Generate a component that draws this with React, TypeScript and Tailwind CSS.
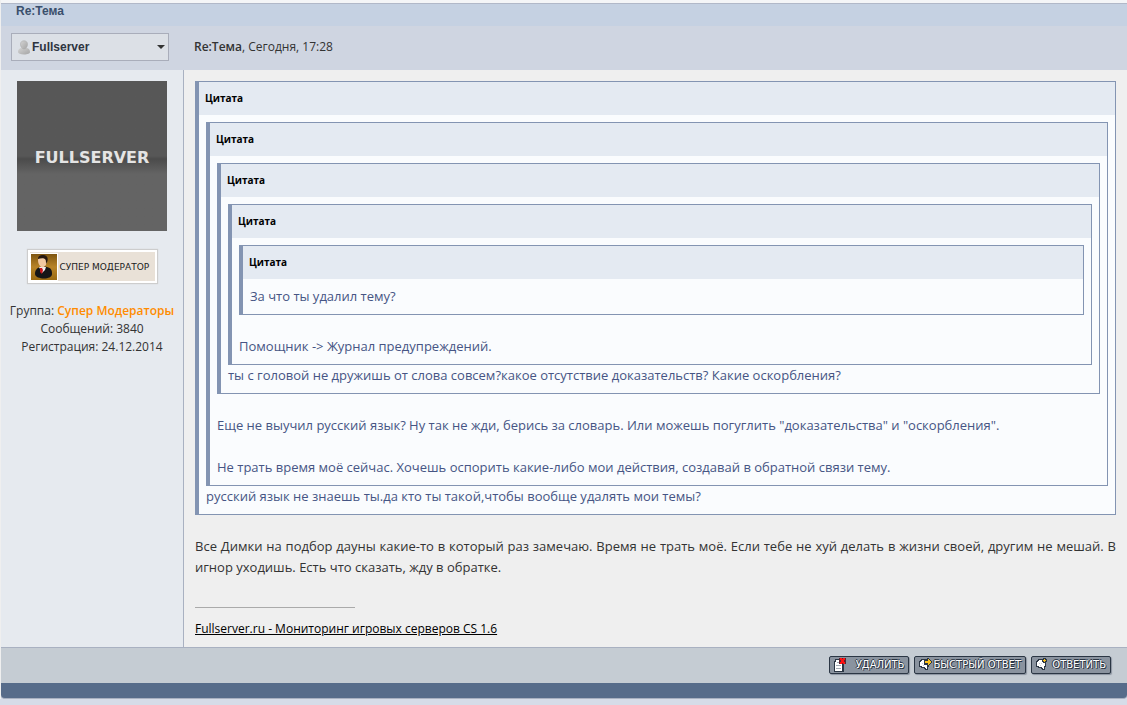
import type { ReactNode } from "react";

const QUOTE_TITLE = "Цитата";

function UserIcon() {
  return (
    <svg width="14" height="15" viewBox="0 0 14 15" aria-hidden="true">
      <defs>
        <linearGradient id="user" x1="0" y1="0" x2="1" y2="1">
          <stop offset="0" stopColor="#d4d4d4" />
          <stop offset="1" stopColor="#a4a4a4" />
        </linearGradient>
      </defs>
      <path d="M1 12c0-2.500 1.500-4 4-4.300h4c2.500.3 4 1.800 4 4.300 0 1.500-2.500 2.500-6 2.500S1 13.500 1 12z" fill="url(#user)" />
      <path d="M3.500 4.200C3.500 2 5 .8 7 .8s3.500 1.200 3.500 3.400S9 9 7 9 3.500 6.400 3.500 4.200z" fill="url(#user)" stroke="#ababab" strokeWidth=".6" />
    </svg>
  );
}

function ModeratorIcon() {
  return (
    <svg width="28" height="28" viewBox="-1 -1 28 28" className="shrink-0" aria-hidden="true">
      <defs>
        <linearGradient id="gold" x1="0" y1="0" x2="0" y2="1">
          <stop offset="0" stopColor="#7e5510" />
          <stop offset=".5" stopColor="#b88428" />
          <stop offset="1" stopColor="#9a6a12" />
        </linearGradient>
      </defs>
      <rect x="-1" y="-1" width="28" height="28" fill="#fff" />
      <rect width="26" height="26" fill="url(#gold)" />
      <path d="M4 20c0-4 2-6 5-7l3-1 4 1c4 1 5 3 5 7 0 3-4 4.500-8 4.500S4 23 4 20z" fill="#151517" />
      <path d="M8 13l3 6 3-3 1-3z" fill="#f0eeee" />
      <path d="M9 14l2 0 1 2-1 4-2-2z" fill="#c8161c" />
      <path d="M7 6c0-3 2-4 4.500-4S16 3.500 16 6.500 14 13.500 11.500 13.500 7 9.500 7 6z" fill="#f2c9a2" />
      <path d="M7 5c0-3 2-4 5-4s5.500 2 4.500 6L15 10c0-3 0-5-2-5.500-2-.5-4 0-6 .5z" fill="#26180f" />
    </svg>
  );
}

function DeleteIcon() {
  return (
    <svg width="14" height="15" viewBox="0 0 14 15" shapeRendering="crispEdges" aria-hidden="true">
      <path d="M1 2h9v13H0V4h1z" fill="#2b3644" />
      <path d="M2 3h6v11H1V5h1z" fill="#fff" />
      <path d="M3 5h3v1H3zM2 8h5v1H2zM2 11h5v1H2z" fill="#a4abb5" />
      <path d="M5 1h7v6H5z" fill="#5b2430" />
      <path d="M6 1h2v1h1V1h2v2h-1v2h1v2H9V6H8v1H6V5h1V3H6z" fill="#ff1010" />
    </svg>
  );
}

function SpeechBubble() {
  return (
    <>
      <path d="M2 1h6v1h2v7H9v3H6v-1H5v-1H2V9H0V3h1V2h1z" fill="#2b3644" />
      <path d="M3 2h5v1h1v5H8v3H7v-1H6V9H3V8H1V4h1V3h1z" fill="#fff" />
      <path d="M3 5h1v1H3zM5 5h1v1H5zM4 7h1v1H4z" fill="#cdd2d9" />
    </>
  );
}

function QuickReplyIcon() {
  return (
    <svg width="13" height="13" viewBox="0 0 13 13" shapeRendering="crispEdges" aria-hidden="true">
      <SpeechBubble />
      <path d="M5 2h3V0h2v1h1v1h1v1h1v2h-1v1h-1v1h-1v1H8V7H5z" fill="#2b3644" />
      <path d="M6 3h3V1h1v1h1v1h1v2h-1v1h-1v1H9V5H6z" fill="#fdc21a" />
    </svg>
  );
}

function ReplyIcon() {
  return (
    <svg width="13" height="13" viewBox="0 0 13 13" shapeRendering="crispEdges" aria-hidden="true">
      <SpeechBubble />
      <path d="M7 0h3v1h1v3h-1v1H7V4H6V1h1z" fill="#2b3644" />
      <path d="M8 1h1v1h1v1H9v1H8V3H7V2h1z" fill="#fdc21a" />
    </svg>
  );
}

function Quote({ children }: { children: ReactNode }) {
  return (
    <blockquote className="border border-l-4 border-[#8394b2] bg-[#fafcfe]">
      <div className="h-[33px] bg-[#e4eaf2] px-1.5 font-['Open_Sans',sans-serif] text-[10px] leading-8 font-bold text-black">
        {QUOTE_TITLE}
      </div>
      <div className="p-[7px] text-[#465584]">{children}</div>
    </blockquote>
  );
}

interface PostButtonProps {
  icon: ReactNode;
  label: string;
}

function PostButton({ icon, label }: PostButtonProps) {
  return (
    <button
      type="button"
      className="flex h-[18px] min-w-20 items-center justify-between gap-px rounded-xs border border-[#2b3644] bg-[#8a939f] px-1 font-['DejaVu_Sans',sans-serif] text-[10px] leading-none whitespace-nowrap text-white uppercase shadow-[1px_1px_1px_#8a939f] [text-shadow:1px_1px_0_#2b3644,-1px_0_0_#2b3644,0_-1px_0_#2b3644]"
    >
      {icon}
      <span>{label}</span>
    </button>
  );
}

function AuthorPanel() {
  return (
    <aside className="flex w-[183px] shrink-0 flex-col items-center border-r border-[#a9b1c1] bg-[#e6eaef] pt-[11px] text-center font-['Open_Sans',sans-serif] text-xs text-[#333]">
      <div className="flex size-[150px] items-center justify-center bg-linear-to-b from-[#575757] from-50% via-[#4b4b4b] via-52% to-[#646464] to-62% pt-1 font-['DejaVu_Sans',sans-serif] text-base font-bold text-[#e4e4e4]">
        FULLSERVER
      </div>
      <div className="mt-[19px] flex h-[33px] w-[129px] items-center gap-0.5 border-2 border-white bg-[#e9e1d7] text-[#222] shadow-[0_0_1px_1px_#cdcdcd]">
        <ModeratorIcon />
        <span className="font-['DejaVu_Sans',sans-serif] text-[9px] whitespace-nowrap uppercase">
          Супер модератор
        </span>
      </div>
      <div className="mt-[19px] leading-[18px] whitespace-nowrap">
        <p>
          Группа: <b className="font-semibold text-[#ff8c00]">Супер Модераторы</b>
        </p>
        <p>Сообщений: 3840</p>
        <p>Регистрация: 24.12.2014</p>
      </div>
    </aside>
  );
}

export default function App() {
  return (
    <div className="min-h-screen bg-[#d6dce8] font-['Open_Sans',sans-serif] text-[13px] text-[#333]">
      <div className="border-l border-[#efefef]">
        <div className="h-1 border-b border-[#b1b8c8] bg-[#f4f5f7]" />
        <h1 className="h-[22px] bg-[#c5d1e2] px-[15px] font-['Liberation_Sans',sans-serif] text-xs leading-[14px] font-bold text-[#3a4f6c]">
          Re:Тема
        </h1>

        <header className="flex h-11 items-center bg-[#cfd5e1] pb-0.5">
          <div className="w-[183px] shrink-0 px-2.5">
            <div className="relative w-[158px]">
              <select
                aria-label="Пользователь"
                className="block h-7 w-full appearance-none border border-[#a9adba] bg-[#dce0e6] pl-5 font-['Liberation_Sans',sans-serif] text-xs font-bold text-[#2e3440]"
              >
                <option>Fullserver</option>
              </select>
              <span className="pointer-events-none absolute top-[7px] left-1.5">
                <UserIcon />
              </span>
              <span className="pointer-events-none absolute top-3 right-1 border-x-4 border-t-4 border-x-transparent border-t-[#333]" />
            </div>
          </div>
          <p className="pl-2.5 text-xs">
            <b className="font-semibold">Re:Тема</b>, Сегодня, 17:28
          </p>
        </header>

        <div className="flex">
          <AuthorPanel />
          <main className="min-w-0 flex-1 bg-[#efefef] px-[11px] pt-[11px] pb-2 leading-[21px]">
            <Quote>
              <Quote>
                <Quote>
                  <Quote>
                    <Quote>За что ты удалил тему?</Quote>
                    <br />
                    Помощник -&gt; Журнал предупреждений.
                  </Quote>
                  ты с головой не дружишь от слова совсем?какое отсутствие доказательств? Какие
                  оскорбления?
                </Quote>
                <br />
                Еще не выучил русский язык? Ну так не жди, берись за словарь. Или можешь погуглить
                "доказательства" и "оскорбления".
                <br />
                <br />
                Не трать время моё сейчас. Хочешь оспорить какие-либо мои действия, создавай в
                обратной связи тему.
              </Quote>
              русский язык не знаешь ты.да кто ты такой,чтобы вообще удалять мои темы?
            </Quote>
            <p className="mt-[21px] text-justify">
              Все Димки на подбор дауны какие-то в который раз замечаю. Время не трать моё. Если
              тебе не хуй делать в жизни своей, другим не мешай. В игнор уходишь. Есть что сказать,
              жду в обратке.
            </p>
            <hr className="mt-[29px] mb-2.5 w-40 border-[#aaa]" />
            <a href="#fullserver" className="block text-xs leading-[21px] text-black underline">
              Fullserver.ru - Мониторинг игровых серверов CS 1.6
            </a>
          </main>
        </div>

        <footer className="flex h-9 items-center justify-end gap-[5px] border-t border-[#a9b1c1] bg-[#c5ccd3] pr-4 pb-0.5">
          <PostButton icon={<DeleteIcon />} label="Удалить" />
          <PostButton icon={<QuickReplyIcon />} label="Быстрый ответ" />
          <PostButton icon={<ReplyIcon />} label="Ответить" />
        </footer>
        <div className="h-4 rounded-b-sm border-b border-[#a9b1c1] bg-[#576c8a]" />
      </div>
    </div>
  );
}
